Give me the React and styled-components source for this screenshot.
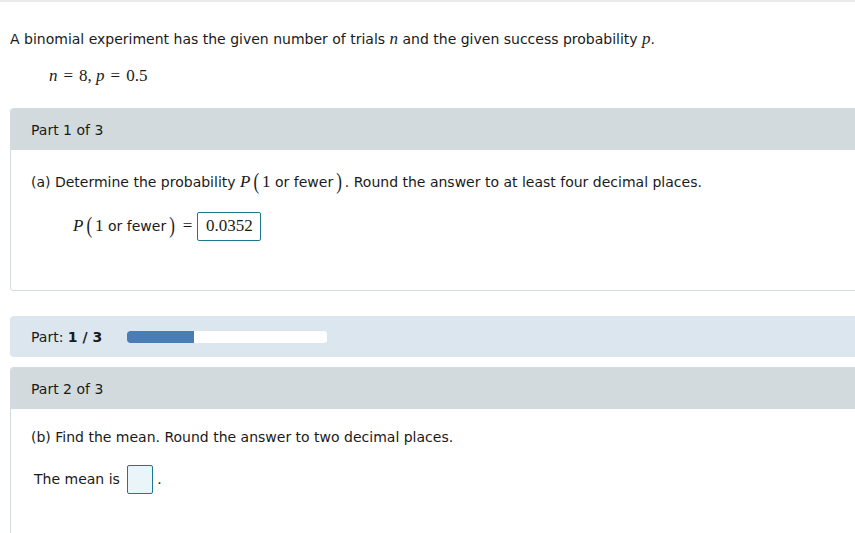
import React from "react";
import styled, { createGlobalStyle } from "styled-components";

const GlobalStyle = createGlobalStyle`
  body {
    margin: 0;
    background: #ffffff;
    font-family: "DejaVu Sans", Verdana, sans-serif;
    font-size: 14px;
    color: #1a1a1a;
  }
`;

const Page = styled.div`
  box-sizing: border-box;
  height: 100vh;
  border-top: 2px solid #e8eaeb;
  padding: 22px 0 0 10px;
  overflow: hidden;
`;

const Line = styled.div`
  height: ${({ h }) => h || 30}px;
  display: flex;
  align-items: center;
  padding-left: ${({ indent }) => indent || 0}px;
`;

const M = styled.span`
  font-family: "Liberation Serif", "Times New Roman", serif;
  font-size: 17px;
  font-style: ${({ it }) => (it ? "italic" : "normal")};
  padding: 0 ${({ pad }) => pad || 0}px;
  white-space: pre;
`;

const Paren = styled.span`
  display: inline-block;
  font-family: "Liberation Serif", serif;
  font-size: 17px;
  transform: scaleY(1.35);
  margin: 0 3px;
`;

const Panel = styled.section`
  margin-top: ${({ top }) => top || 0}px;
  margin-right: -10px;
  border-radius: 4px 0 0 4px;
  border: 1px solid #d4dadd;
  border-right: none;
  overflow: hidden;
`;

const PanelHead = styled.div`
  background: #d2dadd;
  height: 41px;
  display: flex;
  align-items: center;
  padding-left: 20px;
`;

const PanelBody = styled.div`
  padding: ${({ pt }) => pt || 17}px 0 0 20px;
  min-height: ${({ min }) => min || 0}px;
  background: #fff;
`;

const AnswerBox = styled.span`
  display: inline-flex;
  align-items: center;
  justify-content: center;
  min-width: ${({ w }) => w || 25}px;
  height: 29px;
  box-sizing: border-box;
  border: 1px solid #1b7a8c;
  border-radius: 2px;
  background: ${({ empty }) => (empty ? "#e9f5f8" : "#fff")};
  padding: 0 5px;
  margin-left: ${({ ml }) => ml || 0}px;
`;

const ProgressBar = styled.div`
  margin: 25px -10px 0 0;
  height: 41px;
  background: #dbe6ef;
  border-radius: 4px 0 0 4px;
  display: flex;
  align-items: center;
  padding-left: 21px;
  gap: 25px;
`;

const Bold = styled.b`
  font-weight: bold;
  white-space: pre;
`;

const Track = styled.div`
  width: 200px;
  height: 12px;
  background: #fff;
  border-radius: 3px;
  overflow: hidden;
`;

const Fill = styled.div`
  height: 100%;
  background: #4a7db5;
  border-radius: 3px 0 0 3px;
`;

export default function App() {
  const progress = 1 / 3;
  return (
    <>
      <GlobalStyle />
      <Page>
        <Line h={30}>
          A binomial experiment has the given number of trials&nbsp;
          <M it>n</M>&nbsp;and the given success probability&nbsp;
          <M it>p</M>.
        </Line>
        <Line h={44} indent={39}>
          <M it>n</M>
          <M pad={6}>=</M>
          <M>8,</M>
          <M it> p</M>
          <M pad={6}>=</M>
          <M>0.5</M>
        </Line>
        <Panel top={10}>
          <PanelHead>Part 1 of 3</PanelHead>
          <PanelBody min={123}>
            <Line h={30}>
              (a) Determine the probability&nbsp;
              <M it>P</M>
              <Paren>(</Paren>
              <M>1</M>&nbsp;or fewer<Paren>)</Paren>. Round the answer to at least four decimal places.
            </Line>
            <Line h={58} indent={42}>
              <M it>P</M>
              <Paren>(</Paren>
              <M>1</M>&nbsp;or fewer<Paren>)</Paren>
              <M pad={5}>=</M>
              <AnswerBox w={64}>
                <M>0.0352</M>
              </AnswerBox>
            </Line>
          </PanelBody>
        </Panel>
        <ProgressBar>
          <span>
            Part: <Bold>1 / 3</Bold>
          </span>
          <Track>
            <Fill style={{ width: `${progress * 100}%` }} />
          </Track>
        </ProgressBar>
        <Panel top={10}>
          <PanelHead>Part 2 of 3</PanelHead>
          <PanelBody pt={13} min={160}>
            <Line h={30}>
              (b) Find the mean. Round the answer to two decimal places.
            </Line>
            <Line h={54} indent={3}>
              The mean is
              <AnswerBox empty w={26} ml={7} />
              <span>&nbsp;.</span>
            </Line>
          </PanelBody>
        </Panel>
      </Page>
    </>
  );
}
